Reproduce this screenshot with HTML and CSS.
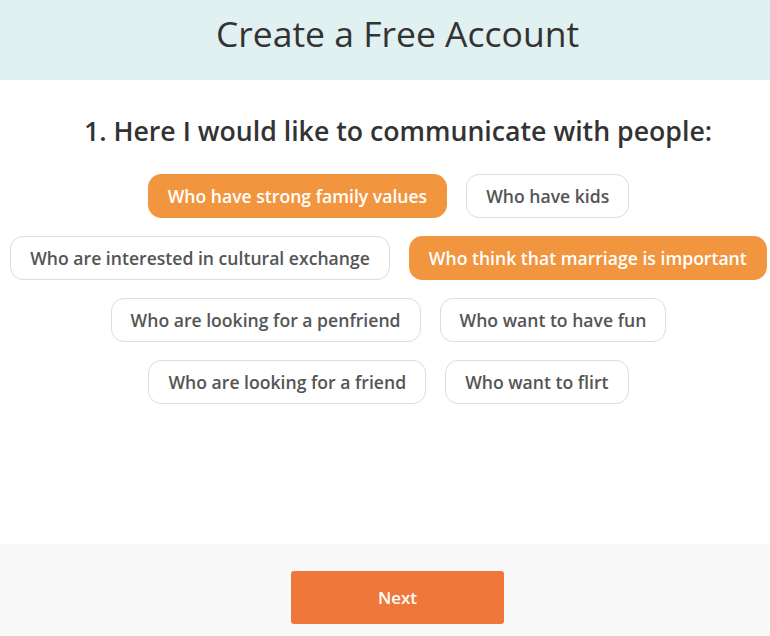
FILE: index.html
```html
<!DOCTYPE html>
<html>
<head>
<meta charset="utf-8">
<link rel="stylesheet" href="styles.css">
</head>
<body>
<div class="page">
  <header class="header">
    <h1 class="title">Create a Free Account</h1>
  </header>
  <main class="main">
    <h2 class="question">1. Here I would like to communicate with people:</h2>
    <div class="options">
      <button class="opt selected">Who have strong family values</button>
      <button class="opt">Who have kids</button>
      <button class="opt">Who are interested in cultural exchange</button>
      <button class="opt selected">Who think that marriage is important</button>
      <button class="opt">Who are looking for a penfriend</button>
      <button class="opt">Who want to have fun</button>
      <button class="opt">Who are looking for a friend</button>
      <button class="opt">Who want to flirt</button>
    </div>
  </main>
  <footer class="footer">
    <button class="next">Next</button>
  </footer>
</div>
</body>
</html>
```

FILE: styles.css
```css
* { box-sizing: border-box; }
html, body { margin: 0; padding: 0; }
body {
  font-family: "Open Sans", "Noto Sans", sans-serif;
  background: #ffffff;
  width: 770px;
  height: 636px;
  overflow: hidden;
}
.page {
  display: flex;
  flex-direction: column;
  height: 636px;
}
.header {
  height: 80px;
  background: #e1f0f0;
  display: flex;
  justify-content: center;
  padding-top: 8px;
  padding-left: 25px;
}
.title {
  margin: 0;
  font-size: 35.5px;
  font-weight: 400;
  color: #333333;
  line-height: 50px;
}
.main {
  flex: 1;
  display: flex;
  flex-direction: column;
  align-items: center;
}
.question {
  margin: 34px 0 0 0;
  font-size: 26.7px;
  font-weight: 600;
  color: #333333;
  line-height: 34px;
  padding-left: 26px;
}
.options {
  margin-top: 26px;
  display: flex;
  flex-wrap: wrap;
  justify-content: center;
  gap: 18px 19px;
  width: 770px;
  padding: 0 2px 0 9px;
}
.opt {
  font-family: "Open Sans", "Noto Sans", sans-serif;
  font-size: 17.6px;
  font-weight: 600;
  color: #555555;
  background: #ffffff;
  border: 1px solid #dddddd;
  border-radius: 13px;
  height: 44px;
  padding: 0 19px;
  cursor: pointer;
}
.opt.selected {
  background: #f2953f;
  border-color: #f2953f;
  color: #ffffff;
}
.footer {
  height: 92px;
  background: #f9f9f9;
  display: flex;
  justify-content: center;
  padding-top: 27px;
  padding-left: 25px;
}
.next {
  width: 213px;
  height: 53px;
  background: #f0773a;
  border: none;
  border-radius: 3px;
  color: #ffffff;
  font-family: "Open Sans", "Noto Sans", sans-serif;
  font-size: 17px;
  font-weight: 600;
}
```
